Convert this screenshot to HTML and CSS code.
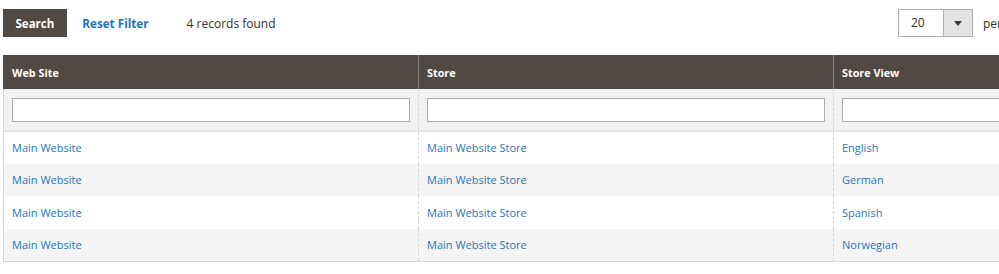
FILE: index.html
```html
<!DOCTYPE html>
<html lang="en">

<head>
  <meta charset="UTF-8">
  <title>Stores Grid</title>
  <link rel="stylesheet" href="styles.css">
</head>

<body>
  <div class="grid-page">
    <div class="grid-toolbar">
      <button class="action-search">Search</button>
      <a class="action-reset" href="#">Reset Filter</a>
      <span class="records-found">4 records found</span>
      <span class="toolbar-spacer"></span>
      <div class="pager">
        <div class="limiter">
          <span class="limiter-value">20</span>
          <span class="limiter-toggle">
            <svg width="8" height="5" viewBox="0 0 8 5"><path d="M0 0h8L4 5z" fill="#41362f"/></svg>
          </span>
        </div>
        <span class="limiter-label">per page</span>
      </div>
    </div>

    <table class="data-grid">
      <thead>
        <tr>
          <th>Web Site</th>
          <th>Store</th>
          <th>Store View</th>
        </tr>
      </thead>
      <tbody>
        <tr class="filters">
          <td><input type="text"></td>
          <td><input type="text"></td>
          <td><input type="text"></td>
        </tr>
        <tr>
          <td><a href="#">Main Website</a></td>
          <td><a href="#">Main Website Store</a></td>
          <td><a href="#">English</a></td>
        </tr>
        <tr>
          <td><a href="#">Main Website</a></td>
          <td><a href="#">Main Website Store</a></td>
          <td><a href="#">German</a></td>
        </tr>
        <tr>
          <td><a href="#">Main Website</a></td>
          <td><a href="#">Main Website Store</a></td>
          <td><a href="#">Spanish</a></td>
        </tr>
        <tr>
          <td><a href="#">Main Website</a></td>
          <td><a href="#">Main Website Store</a></td>
          <td><a href="#">Norwegian</a></td>
        </tr>
      </tbody>
    </table>
  </div>
</body>

</html>
```

FILE: styles.css
```css
html,
body {
  overflow: hidden;
}

body {
  margin: 0;
  font-family: 'Open Sans', 'Liberation Sans', sans-serif;
  font-size: 12px;
  color: #303030;
  background: #fff;
}

.grid-page {
  padding: 9px 0 0 3px;
}

.grid-toolbar {
  display: flex;
  align-items: center;
  width: 996px;
  height: 28px;
}

.action-search {
  height: 28px;
  padding: 0 12.5px;
  border: none;
  background: #514943;
  color: #fff;
  font-family: inherit;
  font-size: 11.5px;
  font-weight: bold;
}

.action-reset {
  margin-left: 15.5px;
  color: #1f74b8;
  font-size: 11.7px;
  font-weight: bold;
  text-decoration: none;
}

.records-found {
  margin-left: 38px;
  color: #303030;
}

.toolbar-spacer {
  flex: 1;
}

.pager {
  display: flex;
  align-items: center;
  width: 101px;
  white-space: nowrap;
}

.limiter {
  display: flex;
  flex: none;
  width: 75px;
  height: 28px;
  box-sizing: border-box;
  border: 1px solid #adadad;
}

.limiter-value {
  flex: 1;
  padding-left: 12px;
  line-height: 26px;
  background: #fff;
}

.limiter-toggle {
  display: flex;
  align-items: center;
  justify-content: center;
  width: 28px;
  background: #e3e3e3;
  border-left: 1px solid #adadad;
}

.limiter-label {
  margin-left: 10px;
}

.data-grid {
  width: 1250px;
  margin-top: 18px;
  border-collapse: collapse;
  table-layout: fixed;
  font-size: 11px;
}

.data-grid th {
  width: 415px;
  height: 34px;
  padding: 0 8px;
  box-sizing: border-box;
  background: #514943;
  color: #fff;
  font-size: 10.8px;
  font-weight: bold;
  text-align: left;
  border-left: 1px solid #8a837f;
}

.data-grid th:first-child {
  border-left-color: #514943;
}

.data-grid th:last-child {
  width: auto;
}

.data-grid td {
  height: 32.5px;
  padding: 0 8px;
  box-sizing: border-box;
  border-left: 1px dashed #d6d6d6;
}

.data-grid td:first-child {
  border-left: 1px solid #d6d6d6;
}

.data-grid tbody tr:nth-child(odd) {
  background: #f5f5f5;
}

.data-grid tbody tr:last-child td {
  border-bottom: 1px solid #d6d6d6;
}

.data-grid .filters td {
  height: 42px;
  background: #f2f2f2;
  border-bottom: 2px solid #e3e3e3;
}

.data-grid .filters input {
  display: block;
  width: 100%;
  height: 24px;
  box-sizing: border-box;
  border: 1px solid #adadad;
  background: #fff;
}

.data-grid tbody tr:nth-child(2) {
  background: #fff;
}

.data-grid a {
  color: #1f74b8;
  text-decoration: none;
}
```
